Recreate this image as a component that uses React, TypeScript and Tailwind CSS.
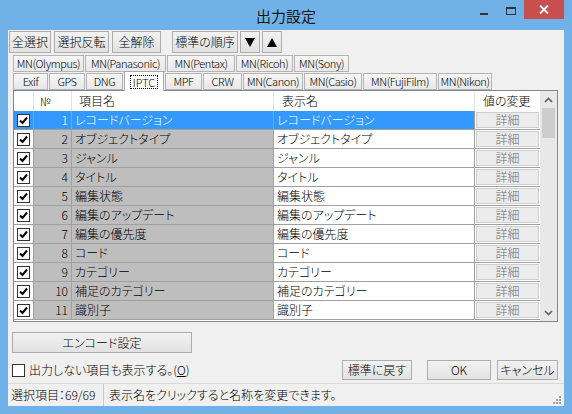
import type { ReactNode } from "react";

const rows = [
  "レコードバージョン",
  "オブジェクトタイプ",
  "ジャンル",
  "タイトル",
  "編集状態",
  "編集のアップデート",
  "編集の優先度",
  "コード",
  "カテゴリー",
  "補足のカテゴリー",
  "識別子",
];

const tabsTop = [
  { label: "MN(Olympus)", w: "w-[71px]" },
  { label: "MN(Panasonic)", w: "w-[81px]" },
  { label: "MN(Pentax)", w: "w-[68px]" },
  { label: "MN(Ricoh)", w: "w-[57px]" },
  { label: "MN(Sony)", w: "w-[55px]" },
];

const tabsBottom = [
  { label: "Exif", w: "w-[35px]" },
  { label: "GPS", w: "w-[36px]" },
  { label: "DNG", w: "w-[37px]" },
  { label: "IPTC", w: "w-[40px]", active: true },
  { label: "MPF", w: "w-[37px]" },
  { label: "CRW", w: "w-[39px]" },
  { label: "MN(Canon)", w: "w-[60px]" },
  { label: "MN(Casio)", w: "w-[58px]" },
  { label: "MN(FujiFilm)", w: "w-[74px]" },
  { label: "MN(Nikon)", w: "w-[54px]" },
];

function Btn({ children, className = "" }: { children: ReactNode; className?: string }) {
  return (
    <div
      className={
        "flex items-center justify-center border border-[#adadad] bg-gradient-to-b from-[#f2f2f2] to-[#e2e2e2] " +
        className
      }
    >
      {children}
    </div>
  );
}

function Tab({ label, w, active }: { label: string; w: string; active?: boolean }) {
  if (active) {
    return (
      <div
        className={
          "relative z-10 -mb-[1px] flex h-[20px] items-center justify-center border border-b-0 border-[#a8a8a8] bg-white " +
          w
        }
      >
        <span className="border border-dotted border-black px-[2px] leading-[12px]">{label}</span>
      </div>
    );
  }
  return (
    <div
      className={
        "flex h-[17px] items-center justify-center border border-[#b4b4b4] bg-gradient-to-b from-[#f6f6f6] to-[#e8e8e8] whitespace-nowrap tracking-[-0.4px] " +
        w
      }
    >
      {label}
    </div>
  );
}

function Check({ on = true }: { on?: boolean }) {
  return (
    <div className="flex h-[13px] w-[13px] items-center justify-center border border-[#333] bg-white">
      {on && (
        <svg width="11" height="11" viewBox="0 0 11 11">
          <path d="M2 5.5 L4.5 8 L9 2.5" fill="none" stroke="#000" strokeWidth="2" />
        </svg>
      )}
    </div>
  );
}

function Chevron({ down }: { down?: boolean }) {
  return (
    <svg width="9" height="6" viewBox="0 0 9 6">
      <path
        d={down ? "M1 1 L4.5 4.5 L8 1" : "M1 5 L4.5 1.5 L8 5"}
        fill="none"
        stroke="#606060"
        strokeWidth="1.6"
      />
    </svg>
  );
}

export default function App() {
  return (
    <div className="flex h-[414px] w-[572px] flex-col overflow-hidden bg-[#70b2e8] font-['Noto_Sans_CJK_JP',sans-serif] text-[11px] leading-none font-light text-black [font-feature-settings:'palt']">
      {/* title bar */}
      <div className="grid h-[30px] grid-cols-[1fr_auto_1fr]">
        <div />
        <div className="flex items-center pt-[1px] text-[15px] font-normal text-[#1a1a1a]">出力設定</div>
        <div className="flex items-start justify-end pr-[8px]">
          <div className="mt-[13px] mr-[18px] h-[2px] w-[8px] bg-[#333]" />
          <div className="mt-[7px] mr-[8px] h-[8px] w-[10px] border border-t-2 border-[#333]" />
          <div className="flex h-[19px] w-[40px] items-center justify-center bg-[#c7504f]">
            <svg width="10" height="9" viewBox="0 0 10 9">
              <path d="M1 0.5 L9 8.5 M9 0.5 L1 8.5" stroke="#fff" strokeWidth="1.8" />
            </svg>
          </div>
        </div>
      </div>

      {/* client */}
      <div className="mx-[8px] mb-[8px] flex flex-1 flex-col bg-[#f0f0f0]">
        {/* toolbar */}
        <div className="mt-[1px] flex h-[22px] pl-[1px] text-[12px]">
          <Btn className="w-[42px]">全選択</Btn>
          <Btn className="ml-[3px] w-[55px]">選択反転</Btn>
          <Btn className="ml-[3px] w-[49px]">全解除</Btn>
          <Btn className="ml-[11px] w-[66px]">標準の順序</Btn>
          <Btn className="ml-[2px] w-[20px]">
            <svg width="10" height="9" viewBox="0 0 10 9">
              <path d="M0 0 H10 L5 9 Z" fill="#000" />
            </svg>
          </Btn>
          <Btn className="ml-[2px] w-[20px]">
            <svg width="10" height="9" viewBox="0 0 10 9">
              <path d="M0 9 H10 L5 0 Z" fill="#000" />
            </svg>
          </Btn>
        </div>

        {/* tabs */}
        <div className="mt-[2px] ml-[5px] flex h-[17px] gap-[1px]">
          {tabsTop.map(t => (
            <Tab key={t.label} label={t.label} w={t.w} />
          ))}
        </div>
        <div className="ml-[5px] flex h-[18px] items-end gap-[1px]">
          {tabsBottom.map(t => (
            <Tab key={t.label} label={t.label} w={t.w} active={t.active} />
          ))}
        </div>

        {/* grid */}
        <div className="ml-[5px] flex h-[232px] w-[545px] overflow-hidden border border-[#828790] bg-white">
          <div className="flex w-[526px] flex-col">
            <div className="flex h-[20px] shrink-0 text-[12px]">
              <div className="w-[20px] border-r border-[#e3e3e3]" />
              <div className="flex w-[38px] items-center border-r border-[#e3e3e3] pl-[6px] text-[11px]">№</div>
              <div className="flex w-[202px] items-center border-r border-[#e3e3e3] pl-[7px]">項目名</div>
              <div className="flex w-[201px] items-center border-r border-[#e3e3e3] pl-[8px]">表示名</div>
              <div className="flex w-[65px] items-center pl-[8px]">値の変更</div>
            </div>
            {rows.map((name, i) => {
              const sel = i === 0;
              return (
                <div key={name} className="flex h-[19px] shrink-0 text-[12px]">
                  <div
                    className={
                      "flex w-[20px] items-center justify-center border-r border-b border-[#a0a0a0] " +
                      (sel ? "bg-[#3399ff]" : "bg-white")
                    }
                  >
                    <Check />
                  </div>
                  <div
                    className={
                      "flex w-[38px] items-center justify-end border-r border-b border-[#a0a0a0] pr-[3px] " +
                      (sel ? "bg-[#3399ff] text-white" : "bg-[#bebebe]")
                    }
                  >
                    {i + 1}
                  </div>
                  <div
                    className={
                      "flex w-[202px] items-center border-r border-b border-[#a0a0a0] pl-[3px] " +
                      (sel ? "bg-[#3399ff] text-white" : "bg-[#bebebe]")
                    }
                  >
                    {name}
                  </div>
                  <div
                    className={
                      "flex w-[201px] items-center border-r border-b border-[#a0a0a0] pl-[3px] " +
                      (sel ? "bg-[#3399ff] text-white" : "bg-white")
                    }
                  >
                    {name}
                  </div>
                  <div className="flex w-[65px] items-center justify-center border-b border-[#a0a0a0] bg-white p-[1px]">
                    <div className="flex h-full w-full items-center justify-center border border-[#cfcfcf] bg-[#ececec] text-[#6d6d6d]">
                      詳細
                    </div>
                  </div>
                </div>
              );
            })}
          </div>
          <div className="flex w-[17px] flex-col bg-[#e8e8e8]">
            <div className="flex h-[17px] items-center justify-center">
              <Chevron />
            </div>
            <div className="mx-[2px] h-[30px] bg-[#cdcdcd]" />
            <div className="flex-1" />
            <div className="flex h-[17px] items-center justify-center">
              <Chevron down />
            </div>
          </div>
        </div>

        {/* bottom controls */}
        <Btn className="mt-[10px] ml-[4px] h-[21px] w-[180px] text-[12px]">エンコード設定</Btn>
        <div className="mt-[7px] flex h-[20px] items-center">
          <div className="ml-[4px]">
            <Check on={false} />
          </div>
          <span className="ml-[4px] text-[12px]">
            出力しない項目も表示する。(<span className="underline">O</span>)
          </span>
          <div className="flex-1" />
          <Btn className="h-[20px] w-[70px] text-[12px]">標準に戻す</Btn>
          <Btn className="ml-[15px] h-[20px] w-[64px] text-[12px]">OK</Btn>
          <Btn className="mr-[6px] ml-[6px] h-[20px] w-[61px] text-[12px]">キャンセル</Btn>
        </div>

        {/* status bar */}
        <div className="mt-auto flex h-[23px] items-center border-t border-[#d9d9d9] text-[12px]">
          <div className="flex h-full w-[96px] items-center border-r border-[#c8c8c8] pl-[3px]">選択項目：69/69</div>
          <div className="flex-1 pl-[5px]">表示名をクリックすると名称を変更できます。</div>
          <svg width="10" height="10" viewBox="0 0 10 10" className="mt-[10px] mr-[2px]">
            <rect x="7" y="1" width="2" height="2" fill="#a0a0a0" />
            <rect x="4" y="4" width="2" height="2" fill="#a0a0a0" />
            <rect x="7" y="4" width="2" height="2" fill="#a0a0a0" />
            <rect x="1" y="7" width="2" height="2" fill="#a0a0a0" />
            <rect x="4" y="7" width="2" height="2" fill="#a0a0a0" />
            <rect x="7" y="7" width="2" height="2" fill="#a0a0a0" />
          </svg>
        </div>
      </div>
    </div>
  );
}
